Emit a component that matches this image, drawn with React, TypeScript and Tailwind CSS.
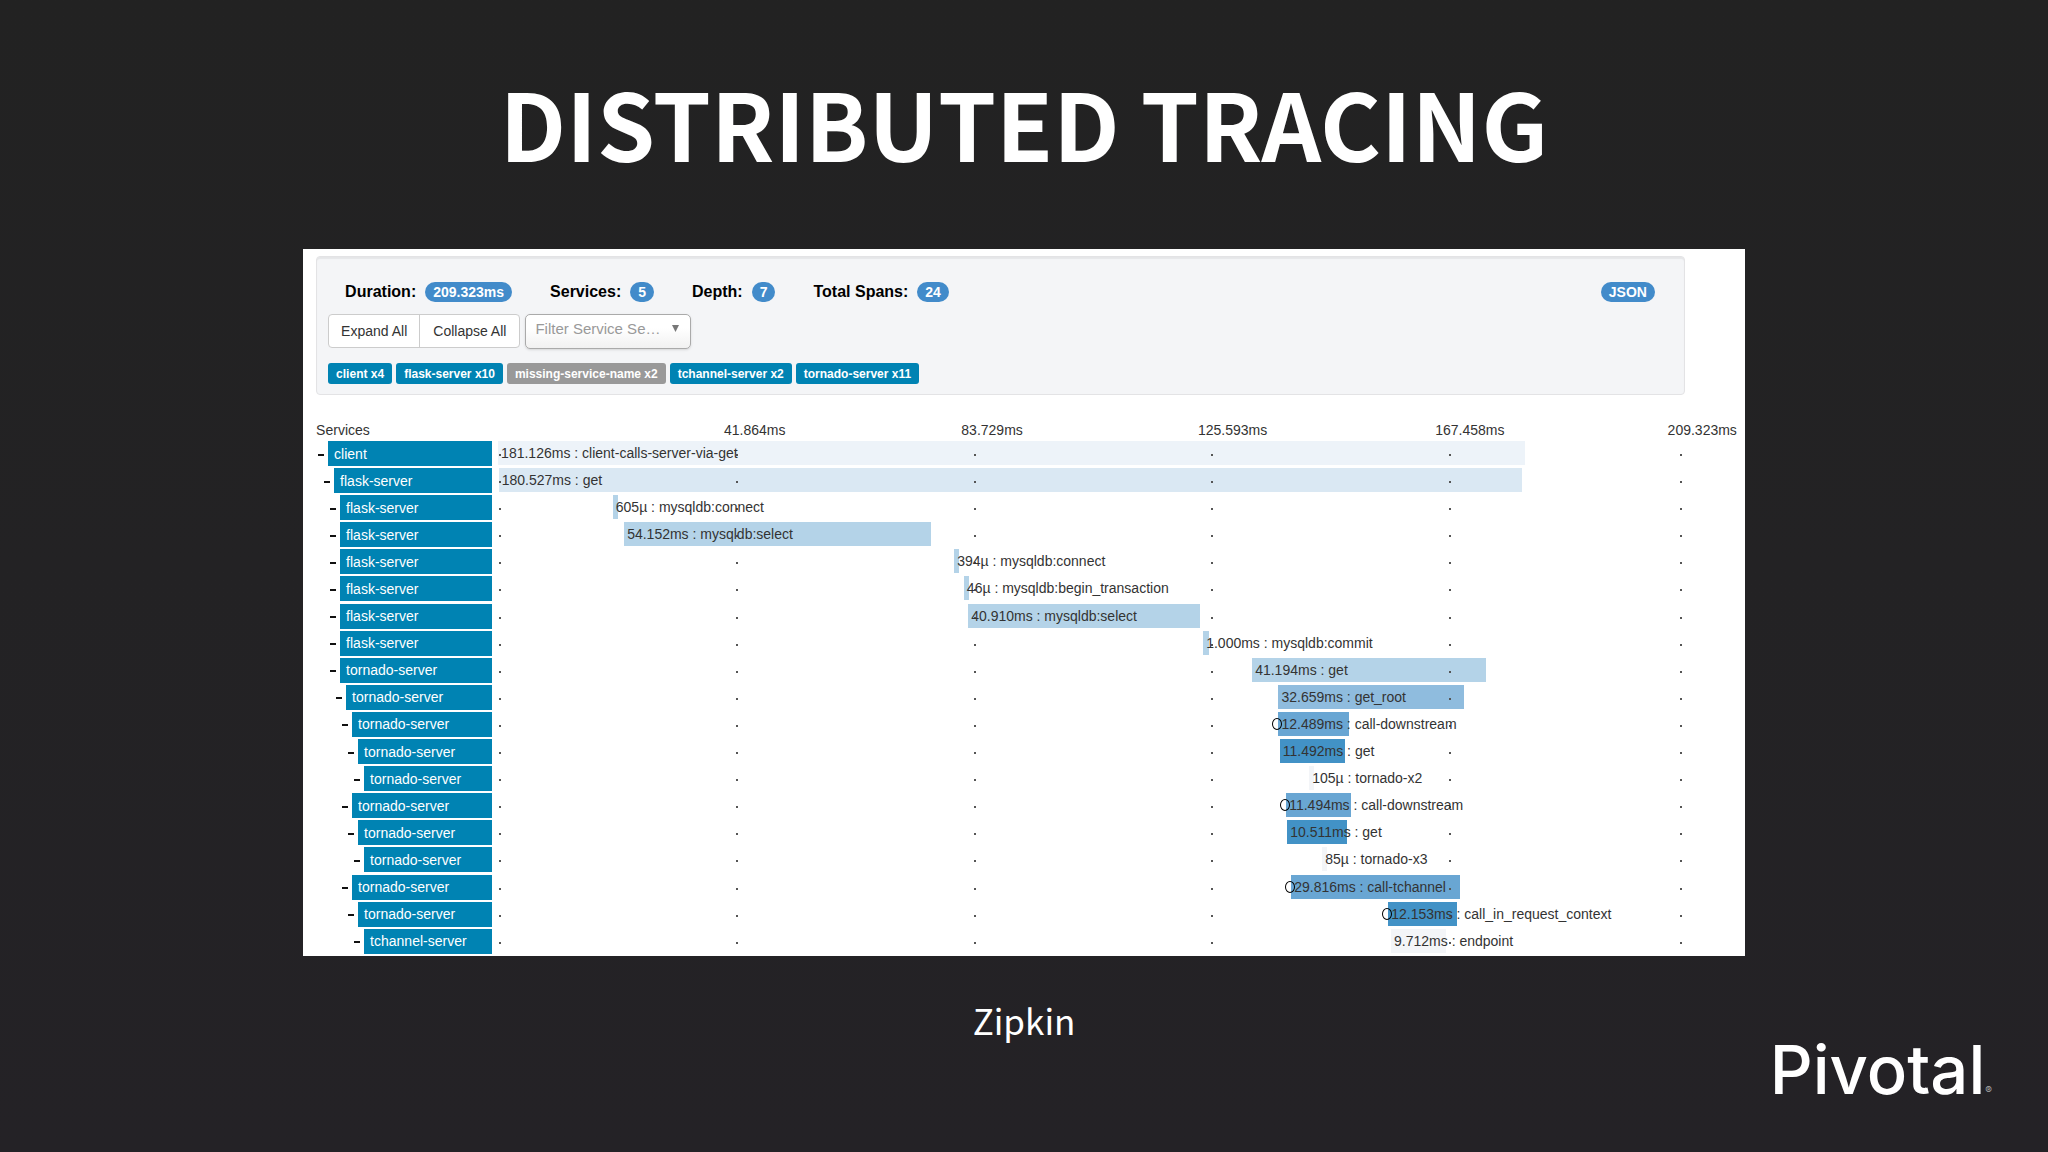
import { useState } from "react";

const TOTAL_MS = 209.323;

const SERVICES = [
  { name: "client", count: 4 },
  { name: "flask-server", count: 10 },
  { name: "missing-service-name", count: 2, muted: true },
  { name: "tchannel-server", count: 2 },
  { name: "tornado-server", count: 11 },
];

const TICKS = ["41.864ms", "83.729ms", "125.593ms", "167.458ms", "209.323ms"];

type Span = {
  depth: number;
  service: string;
  start: number;
  duration: number;
  time: string;
  name: string;
  color: string;
  marker?: boolean;
};

const SPANS: Span[] = [
  { depth: 0, service: "client", start: 0, duration: 181.126, time: "181.126ms", name: "client-calls-server-via-get", color: "bg-[#edf3f9]" },
  { depth: 1, service: "flask-server", start: 0.1, duration: 180.527, time: "180.527ms", name: "get", color: "bg-[#dae8f3]" },
  { depth: 2, service: "flask-server", start: 20.23, duration: 0.605, time: "605µ", name: "mysqldb:connect", color: "bg-[#b4d3e8]" },
  { depth: 2, service: "flask-server", start: 22.23, duration: 54.152, time: "54.152ms", name: "mysqldb:select", color: "bg-[#b4d3e8]" },
  { depth: 2, service: "flask-server", start: 80.44, duration: 0.394, time: "394µ", name: "mysqldb:connect", color: "bg-[#b4d3e8]" },
  { depth: 2, service: "flask-server", start: 82.15, duration: 0.046, time: "46µ", name: "mysqldb:begin_transaction", color: "bg-[#b4d3e8]" },
  { depth: 2, service: "flask-server", start: 82.91, duration: 40.91, time: "40.910ms", name: "mysqldb:select", color: "bg-[#b4d3e8]" },
  { depth: 2, service: "flask-server", start: 124.36, duration: 1, time: "1.000ms", name: "mysqldb:commit", color: "bg-[#b4d3e8]" },
  { depth: 2, service: "tornado-server", start: 133, duration: 41.194, time: "41.194ms", name: "get", color: "bg-[#b4d3e8]" },
  { depth: 3, service: "tornado-server", start: 137.64, duration: 32.659, time: "32.659ms", name: "get_root", color: "bg-[#8fbcde]" },
  { depth: 4, service: "tornado-server", start: 137.64, duration: 12.489, time: "12.489ms", name: "call-downstream", color: "bg-[#69a6d3]", marker: true },
  { depth: 5, service: "tornado-server", start: 137.87, duration: 11.492, time: "11.492ms", name: "get", color: "bg-[#4292c6]" },
  { depth: 6, service: "tornado-server", start: 143.06, duration: 0.105, time: "105µ", name: "tornado-x2", color: "bg-[#f3f5f8]" },
  { depth: 4, service: "tornado-server", start: 139, duration: 11.494, time: "11.494ms", name: "call-downstream", color: "bg-[#69a6d3]", marker: true },
  { depth: 5, service: "tornado-server", start: 139.18, duration: 10.511, time: "10.511ms", name: "get", color: "bg-[#4292c6]" },
  { depth: 6, service: "tornado-server", start: 145.35, duration: 0.085, time: "85µ", name: "tornado-x3", color: "bg-[#f3f5f8]" },
  { depth: 4, service: "tornado-server", start: 139.88, duration: 29.816, time: "29.816ms", name: "call-tchannel", color: "bg-[#69a6d3]", marker: true },
  { depth: 5, service: "tornado-server", start: 156.99, duration: 12.153, time: "12.153ms", name: "call_in_request_context", color: "bg-[#4292c6]", marker: true },
  { depth: 6, service: "tchannel-server", start: 157.5, duration: 9.712, time: "9.712ms", name: "endpoint", color: "bg-[#f3f5f8]" },
];

function Badge({ children }: { children: React.ReactNode }) {
  return (
    <span className="inline-flex h-5 items-center rounded-full bg-[#428bca] px-2 text-sm font-bold text-white">
      {children}
    </span>
  );
}

function Stat({ label, value }: { label: string; value: string }) {
  return (
    <div className="flex items-center gap-[9px]">
      <span className="text-base font-bold text-black">{label}</span>
      <Badge>{value}</Badge>
    </div>
  );
}

function Summary() {
  return (
    <section className="h-[139px] rounded border border-[#e3e3e5] bg-[#f4f5f7] px-[11px] pt-[23px] shadow-[inset_0_2px_1px_rgba(0,0,0,0.06)]">
      <div className="flex items-center justify-between pr-[18px] pl-[17px]">
        <div className="flex gap-[38px]">
          <Stat label="Duration:" value="209.323ms" />
          <Stat label="Services:" value="5" />
          <Stat label="Depth:" value="7" />
          <Stat label="Total Spans:" value="24" />
        </div>
        <a href="#json" className="flex">
          <Badge>JSON</Badge>
        </a>
      </div>

      <div className="mt-[10px] flex gap-[5px]">
        <div className="flex h-[34px] rounded border border-[#ccc] bg-white text-sm text-[#333]">
          <button type="button" className="border-r border-[#ccc] px-3">Expand All</button>
          <button type="button" className="px-[13px]">Collapse All</button>
        </div>
        <div className="relative">
          <select
            aria-label="Filter Service"
            className="h-[35px] w-[166px] appearance-none rounded-[5px] border border-[#aaa] bg-linear-to-b from-white from-40% to-[#f1f1f1] pr-6 pb-1 pl-[9px] text-[15px] text-[#999] shadow-sm"
          >
            <option>Filter Service Se…</option>
          </select>
          <svg viewBox="0 0 8 8" className="pointer-events-none absolute top-[11px] right-3 size-[7px] fill-[#777]">
            <path d="M0 0h8L4 8z" />
          </svg>
        </div>
      </div>

      <ul className="mt-[14px] flex gap-1">
        {SERVICES.map((s) => (
          <li
            key={s.name}
            className={`flex h-[21px] items-center rounded-[3px] px-2 text-xs font-bold text-white ${s.muted ? "bg-[#999]" : "bg-[#0083b3]"}`}
          >
            {s.name} x{s.count}
          </li>
        ))}
      </ul>
    </section>
  );
}

function Timeline({ span }: { span: Span }) {
  const left = `${(span.start / TOTAL_MS) * 100}%`;
  const width = `${(span.duration / TOTAL_MS) * 100}%`;

  return (
    <div className="relative h-6 min-w-0 flex-1">
      <div className={`absolute inset-y-0 min-w-[5px] ${span.color}`} style={{ left, width }} />
      <div className="absolute inset-0 grid grid-cols-5 items-center">
        {TICKS.map((tick, i) => (
          <div key={tick} className="mt-1 flex justify-between pr-[3px] pl-px">
            <i className="size-0.5 bg-[#555]" />
            {i === TICKS.length - 1 && <i className="size-0.5 bg-[#555]" />}
          </div>
        ))}
      </div>
      <div className="absolute inset-y-0 flex items-center pl-[3px] text-sm whitespace-nowrap text-[#333]" style={{ left }}>
        {span.marker && <i className="absolute -left-1.5 h-3 w-2.5 rounded-[50%] border border-black" />}
        {span.time} : {span.name}
      </div>
    </div>
  );
}

function SpanRow({ span }: { span: Span }) {
  const [open, setOpen] = useState(true);

  return (
    <li className="flex min-h-0 items-start">
      <div className="flex w-44 shrink-0" style={{ paddingLeft: span.depth * 6 + 2 }}>
        <button
          type="button"
          aria-label={`Toggle ${span.service}`}
          aria-expanded={open}
          onClick={() => setOpen(!open)}
          className="flex w-2.5 shrink-0 items-center pt-0.5"
        >
          <span className="h-0.5 w-1.5 bg-[#111]" />
        </button>
        <span className="flex h-[25px] flex-1 items-center bg-[#0083b3] pl-1.5 text-sm text-white">{span.service}</span>
      </div>
      <div className="flex min-w-0 flex-1 pl-1.5">
        <Timeline span={span} />
      </div>
    </li>
  );
}

function TraceView() {
  return (
    <main className="flex aspect-[1442/707] w-[70.4%] flex-col bg-white pt-[7px] pr-[60px] pl-[13px] font-['Liberation_Sans',Arial,sans-serif]">
      <Summary />
      <div className="mt-6 mb-px flex h-[21px] shrink-0 items-center text-sm text-[#333]">
        <span className="w-[182px] shrink-0">Services</span>
        <div className="grid min-w-0 flex-1 grid-cols-5">
          {TICKS.map((tick, i) => (
            <div key={tick} className="flex justify-end">
              <span className={i === TICKS.length - 1 ? "-mr-[52px]" : i < 2 ? "-mr-[50px]" : "-mr-[57px]"}>{tick}</span>
            </div>
          ))}
        </div>
      </div>
      <ul className="grid min-h-0 flex-1 auto-rows-fr">
        {SPANS.map((span, i) => (
          <SpanRow key={i} span={span} />
        ))}
      </ul>
    </main>
  );
}

export default function App() {
  return (
    <div className="flex min-h-screen flex-col items-center bg-linear-to-b from-[#222222] to-[#242226] font-['Noto_Sans_CJK_SC',sans-serif] text-white">
      <h1 className="mt-[74px] text-center text-[93px] leading-[96px] font-semibold">DISTRIBUTED TRACING</h1>
      <div className="mt-[79px] flex w-full justify-center">
        <TraceView />
      </div>
      <footer className="grid w-full grid-cols-3 pt-10">
        <p className="col-start-2 text-center text-[35px] leading-[48px]">Zipkin</p>
        <div className="mt-[38px] flex items-end justify-end pr-14 font-['Inter',sans-serif]">
          <span className="text-[67px] leading-[72px] font-medium">Pivotal</span>
          <span className="mb-2 text-[10px] text-[#aaa]">®</span>
        </div>
      </footer>
    </div>
  );
}
